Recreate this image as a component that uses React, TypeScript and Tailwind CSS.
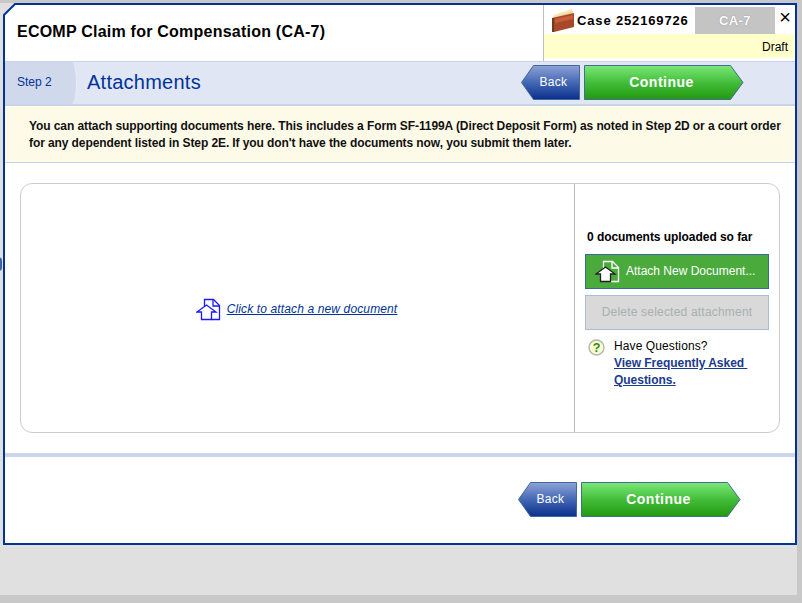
import React from 'react';

const font = { fontFamily: '"Liberation Sans", Arial, sans-serif' };

function BackButton({ id }: { id: string }) {
  return (
    <button className="relative w-[59px] h-[35px] flex items-center justify-center pl-[6px] pb-[2px] text-white text-xs tracking-[0.3px]">
      <svg className="absolute inset-0" width="59" height="35" viewBox="0 0 59 35">
        <defs>
          <linearGradient id={id} x1="0" y1="0" x2="0" y2="1">
            <stop offset="0" stopColor="#8fa3d6" />
            <stop offset="0.5" stopColor="#4468b4" />
            <stop offset="1" stopColor="#0a2f8c" />
          </linearGradient>
        </defs>
        <path d="M12.5 .5H58.5V34.5H12.5L.5 17.5Z" fill={`url(#${id})`} stroke="#3f6a9c" />
      </svg>
      <span className="relative">Back</span>
    </button>
  );
}

function ContinueButton({ id }: { id: string }) {
  return (
    <button className="relative w-[160px] h-[35px] flex items-center justify-center pr-[5px] pb-[2px] text-white text-sm font-bold tracking-[0.5px]">
      <svg className="absolute inset-0" width="160" height="35" viewBox="0 0 160 35">
        <defs>
          <linearGradient id={id} x1="0" y1="0" x2="0" y2="1">
            <stop offset="0" stopColor="#7ce878" />
            <stop offset="0.5" stopColor="#43bd3a" />
            <stop offset="1" stopColor="#22980f" />
          </linearGradient>
        </defs>
        <path d="M.5 .5H146.5L159 17.5L146.5 34.5H.5Z" fill={`url(#${id})`} stroke="#3f6f94" />
      </svg>
      <span className="relative">Continue</span>
    </button>
  );
}

function FolderIcon() {
  return (
    <svg width="24" height="24" viewBox="0 0 24 24">
      <path d="M3 7L21 1V4L3 9Z" fill="#f6e7a8" />
      <path d="M2 9L22 3V6L2 11Z" fill="#e8d9a0" />
      <path d="M1 10L23 5V19L3 24H1Z" fill="#a8482a" />
      <path d="M4 11L22 7V11L4 15Z" fill="#c65f38" />
      <path d="M1 10H3V24H1Z" fill="#6e3a22" />
    </svg>
  );
}

function AttachIcon({ stroke, fill }: { stroke: string; fill: string }) {
  return (
    <svg width="25" height="23" viewBox="0 0 25 23" fill="none">
      <path d="M8.5 8V1.5H17.5L23.5 7.5V21.5H15.5" stroke={stroke} strokeWidth="1.3" />
      <path d="M17 1.5V8H23.5" stroke={stroke} strokeWidth="1.3" />
      <path d="M1 14L10.5 7L20 14H15.5V21.5H5.5V14Z" fill={fill} stroke={stroke === '#ffffff' ? '#222222' : stroke} strokeWidth="1.3" />
    </svg>
  );
}

function HelpIcon() {
  return (
    <svg width="17" height="17" viewBox="0 0 17 17">
      <circle cx="8.5" cy="8.5" r="7.5" fill="#fbfbd2" stroke="#b5b5a8" strokeWidth="1.4" />
      <text x="8.5" y="13" textAnchor="middle" fontSize="12.5" fontWeight="700" fill="#2a8a1c" style={font}>?</text>
    </svg>
  );
}

export default function App() {
  return (
    <div className="relative w-[802px] h-[603px] overflow-hidden bg-[#c8c8c8] pt-[3px] pr-[5px] pb-[8px]" style={font}>
      <div className="h-full bg-[#e0e0e0] pl-[3px]">
        <div className="relative h-[542px] bg-white border-2 border-[#003399] flex flex-col">
          {/* cut corner of the window */}
          <svg className="absolute -left-[2px] -top-[2px]" width="13" height="13" viewBox="0 0 13 13">
            <path d="M0 0H13L0 13Z" fill="#e0e0e0" />
            <path d="M0 13L13 0" stroke="#003399" strokeWidth="2" />
          </svg>

          <div className="h-[56px] flex shrink-0">
            <div className="flex-1 pl-[12px] pt-[17px] text-base font-bold text-black tracking-[0.23px] leading-[20px]">
              ECOMP Claim for Compensation (CA-7)
            </div>
            <div className="w-[252px] pt-[2px] pb-[3px] border-l border-[#c0c0c0] flex flex-col">
              <div className="h-[27px] flex items-center">
                <div className="ml-[7px] -mt-[2px]"><FolderIcon /></div>
                <span className="ml-[2px] mt-[1px] w-[118px] text-[13px] font-bold text-black tracking-[0.85px]">Case 252169726</span>
                <div className="w-[80px] h-full bg-[#c4c4c4] flex items-center justify-center text-[13px] font-bold text-white tracking-[0.4px] [text-shadow:0_0_1px_#777]">CA-7</div>
                <span className="flex-1 text-center text-[20px] leading-[17px] text-black -mt-[6px]">×</span>
              </div>
              <div className="flex-1 bg-[#ffffcc] text-right text-xs text-black pr-[7px] pt-[5px]">Draft</div>
            </div>
          </div>

          <div className="h-[45px] shrink-0 flex items-center bg-[#e0e6f4] border-t border-b-2 border-[#c8d4e8]">
            <div className="w-[72px] h-full bg-[#d0d9ec] rounded-r-[5px_50%] border-r border-[#e8edf7] pl-[12px] pb-[2px] flex items-center text-xs text-[#003399]">
              Step 2
            </div>
            <div className="ml-[10px] -mt-[3px] flex-1 text-xl text-[#003399] tracking-[0.25px]">Attachments</div>
            <div className="flex gap-[4px] mr-[51px] -mt-[1px]">
              <BackButton id="back-top" />
              <ContinueButton id="continue-top" />
            </div>
          </div>

          <div className="h-[57px] shrink-0 bg-[#fefae8] border-b border-[#c5d3ea] pl-[24px] pt-[12px] text-xs font-bold leading-[17px] text-[#111] tracking-[-0.09px] whitespace-nowrap">
            You can attach supporting documents here. This includes a Form SF-1199A (Direct Deposit Form) as noted in Step 2D or a court order
            <br />
            for any dependent listed in Step 2E. If you don't have the documents now, you submit them later.
          </div>

          <div className="mx-[15px] mt-[20px] h-[250px] shrink-0 border border-[#cccccc] rounded-[12px] flex">
            <div className="flex-1 border-r border-[#b8b8b8] flex items-center justify-center gap-[6px] pr-[2px] pt-[2px]">
              <AttachIcon stroke="#1a1aff" fill="#ffffff" />
              <a href="#" className="text-xs italic underline text-[#003399] tracking-[0.13px]">Click to attach a new document</a>
            </div>
            <div className="w-[204px] pl-[10px] pr-[10px] pt-[46px]">
              <div className="pl-[2px] text-xs font-bold leading-[14px] text-black tracking-[-0.05px]">0 documents uploaded so far</div>
              <button className="mt-[10px] w-full h-[35px] bg-[#4aab3c] border border-[#3a6a9a] flex items-center pl-[9px] pb-[1px] gap-[6px] text-xs text-white">
                <AttachIcon stroke="#ffffff" fill="#ffffff" />
                <span>Attach New Document...</span>
              </button>
              <button className="mt-[6px] w-full h-[35px] bg-[#d9d9d9] border border-[#a9bdd6] pb-[2px] text-xs text-[#a8b0b0] tracking-[0.2px]">
                Delete selected attachment
              </button>
              <div className="mt-[8px] flex pl-[3px]">
                <div className="mt-[1px] w-[26px]"><HelpIcon /></div>
                <div className="text-xs leading-[17px] text-black tracking-[0.1px]">
                  Have Questions?
                  <br />
                  <a href="#" className="font-bold underline text-[#1a3a8c] tracking-[-0.03px]">View Frequently Asked&nbsp;<br />Questions.</a>
                </div>
              </div>
            </div>
          </div>

          <div className="mt-[20px] h-[4px] shrink-0 bg-[#ccd6ea]" />

          <div className="flex gap-[4px] pl-[513px] pt-[25px]">
            <BackButton id="back-bottom" />
            <ContinueButton id="continue-bottom" />
          </div>
        </div>
      </div>
      {/* bit of a control peeking in at the left edge */}
      <div className="absolute -left-[5px] top-[257px] w-[7px] h-[14px] rounded-full bg-[#3a62a8]" />
    </div>
  );
}
